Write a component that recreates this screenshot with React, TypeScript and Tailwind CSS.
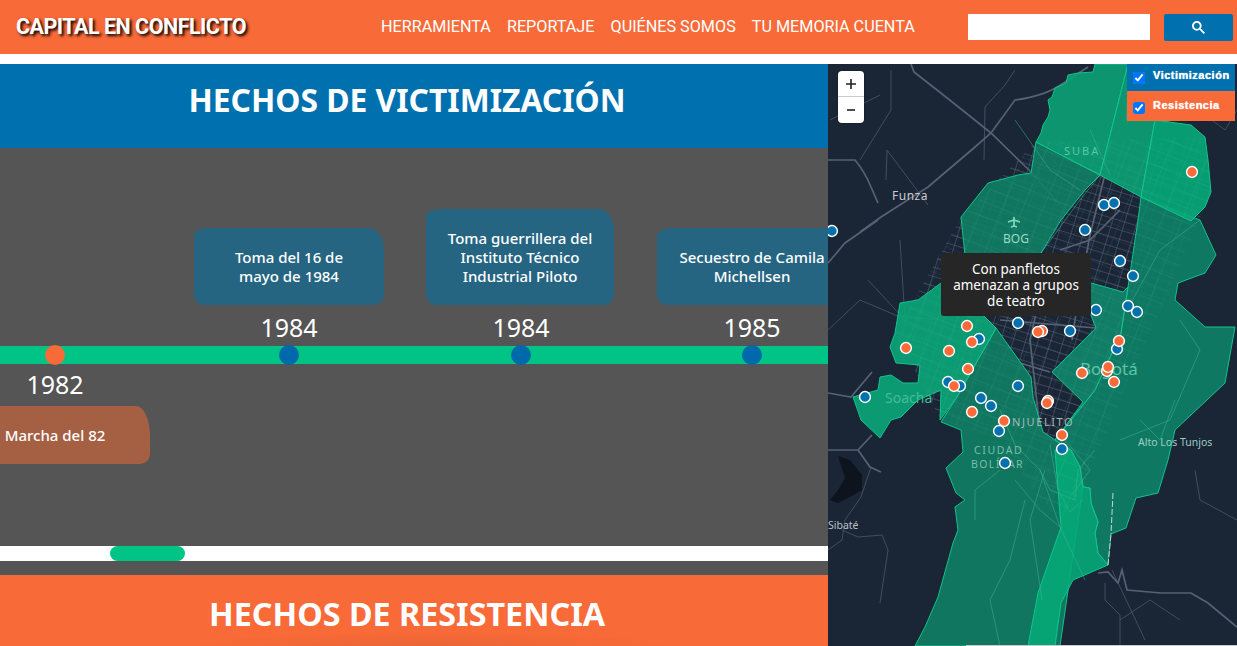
import React from "react";

const columns = [
  { year: "1982", width: "w-[236px]", tone: "bg-[#f86a38]", below: true, text: ["Marcha del 82"], card: "w-[190px] h-[58px] bg-[#a55f43] rounded-[6px_14px_10px_6px/6px_30px_10px_6px]" },
  { year: "1984", width: "w-[232px]", tone: "bg-[#0069ac]", below: false, text: ["Toma del 16 de", "mayo de 1984"], card: "w-[190px] h-[77px] bg-[#266582] rounded-[15px_15px_10px_10px/8px_22px_10px_10px]" },
  { year: "1984", width: "w-[232px]", tone: "bg-[#0069ac]", below: false, text: ["Toma guerrillera del", "Instituto Técnico", "Industrial Piloto"], card: "w-[188px] h-[96px] mr-[2px] bg-[#266582] rounded-[15px_15px_10px_10px/8px_22px_10px_10px]" },
  { year: "1985", width: "w-[230px]", tone: "bg-[#0069ac]", below: false, text: ["Secuestro de Camila", "Michellsen"], card: "w-[190px] h-[77px] bg-[#266582] rounded-[15px_15px_10px_10px/8px_22px_10px_10px]" },
];

const blue = [[832,231],[1085,230],[1120,261],[1133,276],[1096,310],[1128,306],[1137,312],[1018,323],[1070,331],[1117,349],[979,339],[948,382],[960,386],[1018,386],[981,398],[991,406],[865,397],[999,431],[1005,463],[1062,449],[1104,205],[1114,203]];
const orange = [[1192,172],[967,326],[972,342],[906,348],[949,351],[968,369],[954,386],[972,412],[1004,421],[1042,331],[1038,332],[1119,341],[1107,371],[1108,367],[1082,373],[1114,382],[1048,401],[1047,403],[1062,435]];

const roads = [
  "M911 64L914 72Q950 100 991 133L1031 172L1060 205",
  "M1088 67L1062 84Q1045 96 1015 100L991 133L975 147L928 187L881 217L860 232",
  "M828 160L855 160Q865 172 871 187L878 203",
  "M828 263L845 243L878 220",
  "M828 393L851 397L872 372",
  "M828 450L858 450L872 435",
  "M858 450L870 467L881 472",
  "M1098 573L1108 572L1118 583L1122 570L1127 590L1161 593L1191 593L1208 603L1237 627",
  "M1104 178L1090 235L1078 300L1072 340",
  "M1000 320L1096 328",
  "M1048 260L1030 340L1040 430",
  "M1010 360L1050 372",
  "M1120 210L1090 240L1060 250",
];
const thin = [
  "M891 70L891 110L860 160",
  "M886 180L887 150L928 205",
  "M984 160L985 107L1005 85L1015 70",
  "M830 120L880 95",
  "M871 467L861 497L845 520L842 540L828 550",
  "M842 530L858 537L882 535L888 550L880 603",
  "M1105 583L1105 600L1120 615L1120 646",
  "M1120 620L1150 600L1180 620",
  "M1112 570L1145 640",
  "M1195 470L1200 500L1237 520",
  "M868 280L905 320L900 240",
  "M1185 100L1225 130L1237 110",
  "M828 330L860 300L900 317L945 320",
];
const inner = [
  "M1025 500L1010 560L990 600L1000 646",
  "M1015 480L1040 510L1060 527L1085 580",
  "M1000 470L975 490L975 520",
  "M1060 527L1040 470L1015 445L1000 410",
  "M1120 440L1170 420L1200 350L1180 320",
  "M1127 310L1160 250L1200 220",
  "M1015 120L1050 170L1080 190",
  "M1100 175L1080 200L1041 253",
  "M1042 600L1030 520L1045 470",
  "M1090 130L1110 175",
  "M1140 420L1160 440L1175 400",
  "M1040 470L1050 490L1075 500L1078 470L1095 450",
  "M1050 445L1058 490L1070 512L1083 500",
  "M1065 440L1090 470L1072 495",
];

const Region = ({ points, fill }: { points: string; fill: string }) => (
  <polygon points={points} fill={fill} fillOpacity={0.9} stroke="#10c48e" strokeWidth={1} strokeLinejoin="round" />
);

function MapView() {
  return (
    <svg viewBox="828 64 409 582" className="block w-[409px] h-[582px]" style={{ fontFamily: "'Noto Sans', sans-serif" }}>
      <defs>
        <pattern id="streets" width="12" height="9" patternUnits="userSpaceOnUse" patternTransform="rotate(17)">
          <path d="M0 0H12M0 0V9" stroke="#78849a" strokeWidth="0.8" fill="none" />
        </pattern>
        <pattern id="streetsGreen" width="19" height="14" patternUnits="userSpaceOnUse" patternTransform="rotate(22)">
          <path d="M0 0H19M0 0V14" stroke="#6fdcbb" strokeWidth="0.8" fill="none" />
        </pattern>
        <clipPath id="city">
          <polygon points="961,217 1036,142 1205,137 1211,192 1165,300 1120,400 1083,487 1060,520 1040,500 1000,440 941,420 895,333" />
        </clipPath>
      </defs>
      <rect x="828" y="64" width="409" height="582" fill="#1a2536" />
      {thin.map((d) => (
        <path key={d} d={d} fill="none" stroke="#465262" strokeWidth="0.9" />
      ))}
      <path d="M838 456L850 460L862 475L862 490L848 498L838 503L830 500L838 490L845 478Z" fill="#0d141e" />
      <rect x="828" y="64" width="409" height="582" fill="url(#streets)" clipPath="url(#city)" opacity="0.85" />
      {roads.map((d) => (
        <path key={d} d={d} fill="none" stroke="#566273" strokeWidth="1.7" />
      ))}
      <Region points="961,430 963,452 946,468 956,493 965,500 955,507 958,530 953,543 938,597 925,627 915,646 1060,646 1083,487 1071,450 1055,440 1043,432 1033,397 1031,377 996,328 957,397 941,422" fill="#0f8065" />
      <Region points="1138,220 1128,287 1121,333 1095,390 1055,440 1071,450 1080,467 1083,487 1090,488 1091,503 1098,522 1095,533 1098,553 1108,565 1111,534 1126,528 1136,498 1158,493 1168,460 1175,430 1225,383 1235,327 1205,327 1175,300 1178,283 1205,273 1216,255 1200,220 1141,197" fill="#0e8267" />
      <Region points="1091,283 1123,292 1128,287 1121,333 1095,390 1055,440 1083,402 1052,372 1096,328 1085,300" fill="#11876b" />
      <Region points="941,283 918,300 900,303 895,333 890,347 896,363 920,365 918,383 903,383 891,375 880,377 878,390 853,397 861,420 880,438 891,420 901,417 918,400 941,390 940,420 957,397 996,328 985,317 960,300" fill="#0aa779" />
      <Region points="961,217 988,183 1018,175 1031,173 1036,142 1100,175 1085,190 1061,220 1041,253 1010,290 965,255" fill="#0f8065" />
      <Region points="1095,64 1093,72 1078,73 1068,75 1066,83 1055,88 1052,97 1048,100 1050,110 1048,117 1043,125 1041,133 1036,142 1100,175 1128,64" fill="#0ba276" />
      <Region points="1128,64 1100,175 1141,197 1155,120 1127,120" fill="#0ba276" />
      <Region points="1155,120 1141,197 1191,221 1205,207 1211,192 1208,160 1205,137 1191,125" fill="#07aa79" />
      <Region points="1055,450 1071,450 1080,467 1083,487 1090,488 1091,503 1098,522 1095,533 1098,553 1108,565 1073,580 1061,603 1055,646 1028,646 1038,593 1061,527" fill="#06aa78" />
      <rect x="828" y="64" width="409" height="582" fill="url(#streetsGreen)" clipPath="url(#city)" opacity="0.2" />
      <polyline points="1113,493 1111,534" fill="none" stroke="#c8d4d0" strokeDasharray="6 2" />
      <polyline points="1108,565 1111,534" fill="none" stroke="#c8d4d0" strokeDasharray="6 2" />
      {inner.map((d) => (
        <path key={d} d={d} fill="none" stroke="#3fb594" strokeOpacity="0.5" strokeWidth="1" />
      ))}
      <path d="M1014 217v9M1008 222l6 -2 6 2M1011 227l3 -1 3 1" stroke="#7fd6b9" strokeWidth="1.8" fill="none" />
      <g fontSize="12" fill="#b9c0c8">
        <text x="892" y="200" fill="#c9ccd0" letterSpacing="0.5">Funza</text>
        <text x="1003" y="243" fill="#9adcc4">BOG</text>
        <text x="1064" y="155" fill="#57c9a3" fontSize="11" letterSpacing="2">SUBA</text>
        <text x="885" y="403" fontSize="14" fill="#42bd98">Soacha</text>
        <text x="1080" y="375" fontSize="17" fill="#5fc4a8">Bogotá</text>
        <text x="1012" y="426" fill="#a7b8b6" fontSize="11" letterSpacing="1.6">NJUELITO</text>
        <text x="974" y="454" fill="#79bfa8" fontSize="10.5" letterSpacing="1.6">CIUDAD</text>
        <text x="971" y="468" fill="#79bfa8" fontSize="10.5" letterSpacing="1.4">BOLÍVAR</text>
        <text x="1138" y="446" fontSize="10.5" fill="#9fcfc0">Alto Los Tunjos</text>
        <text x="828" y="529" fontSize="10.5">Sibaté</text>
      </g>
      {blue.map(([x, y], i) => (
        <circle key={i} cx={x} cy={y} r="5.4" fill="#0071ae" stroke="#fff" strokeWidth="1.5" />
      ))}
      {orange.map(([x, y], i) => (
        <circle key={i} cx={x} cy={y} r="5.4" fill="#f86a38" stroke="#fff" strokeWidth="1.5" />
      ))}
    </svg>
  );
}

const uiFont = "font-['Noto_Sans',sans-serif]";

export default function App() {
  return (
    <div className="w-[1237px] h-[646px] overflow-hidden bg-white flex flex-col">
      <header className="h-[54px] shrink-0 bg-[#f86a38] flex items-center text-white">
        <div className="w-[381px] pl-4 font-['Roboto',sans-serif] font-bold text-[21.5px] tracking-[-0.5px] [text-shadow:2px_2px_3px_#000] whitespace-nowrap">CAPITAL EN CONFLICTO</div>
        <nav className="flex gap-[16px] font-['Roboto',sans-serif] text-[16.2px] whitespace-nowrap">
          <span>HERRAMIENTA</span>
          <span>REPORTAJE</span>
          <span>QUIÉNES SOMOS</span>
          <span>TU MEMORIA CUENTA</span>
        </nav>
        <div className="ml-auto flex items-start mr-1">
          <div className="w-[182px] h-[26px] bg-white" />
          <div className="ml-[14px] w-[69px] h-[27px] bg-[#0071ae] rounded-[2px] flex items-center justify-center">
            <svg width="13" height="13" viewBox="0 0 13 13" fill="#fff">
              <path d="m4.8495 7.8226c0.82666 0 1.5262-0.29146 2.0985-0.87438 0.57232-0.58292 0.86378-1.2877 0.87438-2.1144 0.010599-0.82666-0.28086-1.5262-0.87438-2.0985-0.59352-0.57232-1.293-0.86378-2.0985-0.87438-0.8055-0.010599-1.5103 0.28086-2.1144 0.87438-0.60414 0.59352-0.8956 1.293-0.87438 2.0985 0.021197 0.8055 0.31266 1.5103 0.87438 2.1144 0.56172 0.60414 1.2665 0.8956 2.1144 0.87438zm4.4695 0.2115 3.681 3.6819-1.259 1.284-3.6817-3.7 0.0019784-0.69479-0.090043-0.098846c-0.87973 0.76087-1.92 1.1413-3.1207 1.1413-1.3553 0-2.5025-0.46363-3.4417-1.3909s-1.4088-2.0686-1.4088-3.4239c0-1.3553 0.4696-2.4966 1.4088-3.4239 0.9392-0.92727 2.0864-1.3969 3.4417-1.4088 1.3553-0.011889 2.4906 0.45771 3.406 1.4088 0.9154 0.95107 1.379 2.0924 1.3909 3.4239 0 1.2126-0.38043 2.2588-1.1413 3.1385l0.098834 0.090049z" />
            </svg>
          </div>
        </div>
      </header>
      <main className="mt-[10px] flex flex-1 min-h-0">
        <section className={`w-[828px] shrink-0 flex flex-col bg-[#555555] text-white overflow-hidden ${uiFont}`}>
          <h2 className="h-[84px] shrink-0 bg-[#0071ae] flex items-center justify-center pr-[14px] pb-[12px] text-[31.8px] font-bold">HECHOS DE VICTIMIZACIÓN</h2>
          <div className="flex h-[398px] shrink-0 -ml-[63px]">
            {columns.map((c, i) => (
              <div key={i} className={`${c.width} shrink-0 flex flex-col items-center`}>
                <div className="h-[198px] w-full flex flex-col items-center justify-end">
                  {!c.below && (
                    <>
                      <div className={`${c.card} flex flex-col items-center justify-center text-[15px] font-medium leading-[19px] whitespace-nowrap`}>
                        {c.text.map((t) => <span key={t}>{t}</span>)}
                      </div>
                      <div className="h-[41px] pt-[7px] text-[25px] leading-[30px]">{c.year}</div>
                    </>
                  )}
                </div>
                <div className="h-[18px] w-full bg-[#00c386] flex items-center justify-center">
                  <span className={`w-5 h-5 rounded-full shrink-0 ${c.tone}`} />
                </div>
                <div className="flex flex-col items-center w-full">
                  {c.below && (
                    <>
                      <div className="h-[42px] pt-[5px] text-[25px] leading-[30px]">{c.year}</div>
                      <div className={`${c.card} flex flex-col items-center justify-center text-[15px] font-medium leading-[19px] whitespace-nowrap`}>
                        {c.text.map((t) => <span key={t}>{t}</span>)}
                      </div>
                    </>
                  )}
                </div>
              </div>
            ))}
          </div>
          <div className="h-[15px] shrink-0 bg-white pl-[110px]">
            <div className="w-[75px] h-[15px] rounded-[8px] bg-[#00c386]" />
          </div>
          <div className="h-[14px] shrink-0" />
          <h2 className="flex-1 bg-[radial-gradient(ellipse_240px_14px_at_430px_100%,#ea6534,#f86a38)] flex items-center justify-center pr-[14px] pt-[6px] text-[32.3px] font-bold">HECHOS DE RESISTENCIA</h2>
        </section>
        <section className="relative flex-1 bg-[#1a2536] overflow-hidden">
          <MapView />
          <div className="absolute left-[10px] top-[7px] w-[26px] h-[52px] bg-white rounded-[4px] shadow-[0_0_2px_rgba(0,0,0,0.3)] flex flex-col text-[#222]">
            <div className="h-[26px] flex items-center justify-center border-b border-[#ccc]">
              <svg width="12" height="12" viewBox="0 0 12 12"><path d="M6 1v10M1 6h10" stroke="#222" strokeWidth="1.6" /></svg>
            </div>
            <div className="h-[26px] flex items-center justify-center">
              <svg width="12" height="12" viewBox="0 0 12 12"><path d="M2 6h8" stroke="#222" strokeWidth="1.6" /></svg>
            </div>
          </div>
          <div className="absolute left-[299px] top-0 w-[108px] font-['Liberation_Sans',sans-serif] font-bold text-[11px] text-white">
            <label className="h-[27px] bg-[#0071ae] flex items-start pl-[6px] gap-[7px]">
              <input type="checkbox" defaultChecked className="w-3 h-3 mt-[8px] m-0 accent-[#0075ff]" />
              <span className="mt-[4px] ml-px leading-[14px] [text-shadow:0_0_1px_#fff] tracking-[0.5px]">Victimización</span>
            </label>
            <label className="h-[30px] bg-[#f86a38] flex items-start pl-[6px] gap-[7px]">
              <input type="checkbox" defaultChecked className="w-3 h-3 mt-[11px] m-0 accent-[#0075ff]" />
              <span className="mt-[7px] ml-px leading-[14px] [text-shadow:0_0_1px_#fff] tracking-[0.5px]">Resistencia</span>
            </label>
          </div>
          <div className={`absolute left-[113px] top-[189px] w-[150px] h-[63px] bg-[#262626] rounded-[3px] flex flex-col items-center justify-center text-white text-[13.5px] leading-[16px] whitespace-nowrap ${uiFont}`}>
            <span>Con panfletos</span>
            <span>amenazan a grupos</span>
            <span>de teatro</span>
          </div>
          <div className="absolute left-[138px] right-0 bottom-0 h-px bg-[#c9cccf]" />
        </section>
      </main>
    </div>
  );
}
